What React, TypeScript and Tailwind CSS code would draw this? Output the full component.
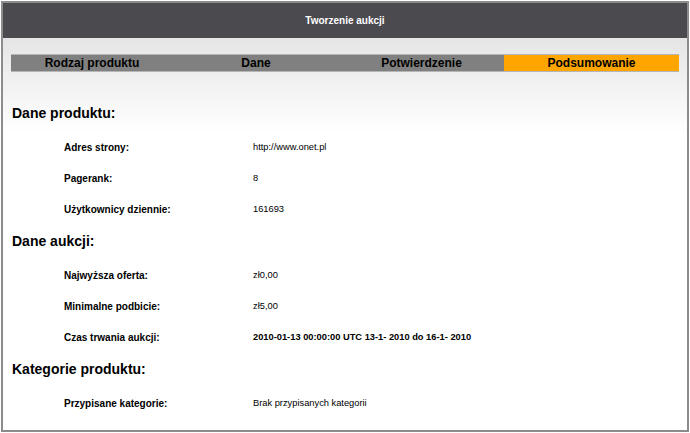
import React from 'react';

type Row = { label: string; value: string; bold?: boolean };

const sections: { title: string; mt: string; rows: Row[] }[] = [
  {
    title: 'Dane produktu:',
    mt: 'mt-0',
    rows: [
      { label: 'Adres strony:', value: 'http://www.onet.pl' },
      { label: 'Pagerank:', value: '8' },
      { label: 'Użytkownicy dziennie:', value: '161693' },
    ],
  },
  {
    title: 'Dane aukcji:',
    mt: 'mt-[7px]',
    rows: [
      { label: 'Najwyższa oferta:', value: 'zł0,00' },
      { label: 'Minimalne podbicie:', value: 'zł5,00' },
      { label: 'Czas trwania aukcji:', value: '2010-01-13 00:00:00 UTC 13-1- 2010 do 16-1- 2010', bold: true },
    ],
  },
  {
    title: 'Kategorie produktu:',
    mt: 'mt-[7px]',
    rows: [{ label: 'Przypisane kategorie:', value: 'Brak przypisanych kategorii' }],
  },
];

const steps = [
  { name: 'Rodzaj produktu', w: 'w-[162px]' },
  { name: 'Dane', w: 'w-[166px]' },
  { name: 'Potwierdzenie', w: 'w-[165px]' },
  { name: 'Podsumowanie', w: 'w-[175px]', active: true },
];

const App: React.FC = () => {
  return (
    <div className="w-[690px] h-[433px] bg-white font-['Liberation_Sans',Arial,sans-serif] text-black">
      <div className="ml-[1px] mt-[1px] w-[688px] h-[431px] border-2 border-[#8c8c8c] flex flex-col">
        <div className="h-[35px] bg-[#4a4a4f] flex items-center justify-center">
          <span className="text-white text-[10px] font-bold">Tworzenie aukcji</span>
        </div>

        <div className="flex-1 bg-[linear-gradient(to_bottom,#e5e5e5,#ffffff_95px)] px-[8px] pt-[16px] flex flex-col">
          <div className="flex h-[18px] border-t border-b border-[#b5b5b5]">
            {steps.map((s) => (
              <div
                key={s.name}
                className={`${s.w} flex items-center justify-center text-[12px] font-bold leading-none ${
                  s.active ? 'bg-[#ffa500]' : 'bg-[#808080]'
                }`}
              >
                {s.name}
              </div>
            ))}
          </div>

          <div className="mt-[32px] flex flex-col">
            {sections.map((sec) => (
              <div key={sec.title} className={sec.mt}>
                <h2 className="text-[14px] leading-[18px] font-bold mb-[10px] pl-[1px]">{sec.title}</h2>
                {sec.rows.map((r) => (
                  <div key={r.label} className="h-[31px] flex items-center">
                    <div className="w-[242px] pl-[53px] text-[10px] font-bold">{r.label}</div>
                    <div className={`text-[9.3px] ${r.bold ? 'font-bold' : ''}`}>{r.value}</div>
                  </div>
                ))}
              </div>
            ))}
          </div>
        </div>
      </div>
    </div>
  );
};

export default App;
